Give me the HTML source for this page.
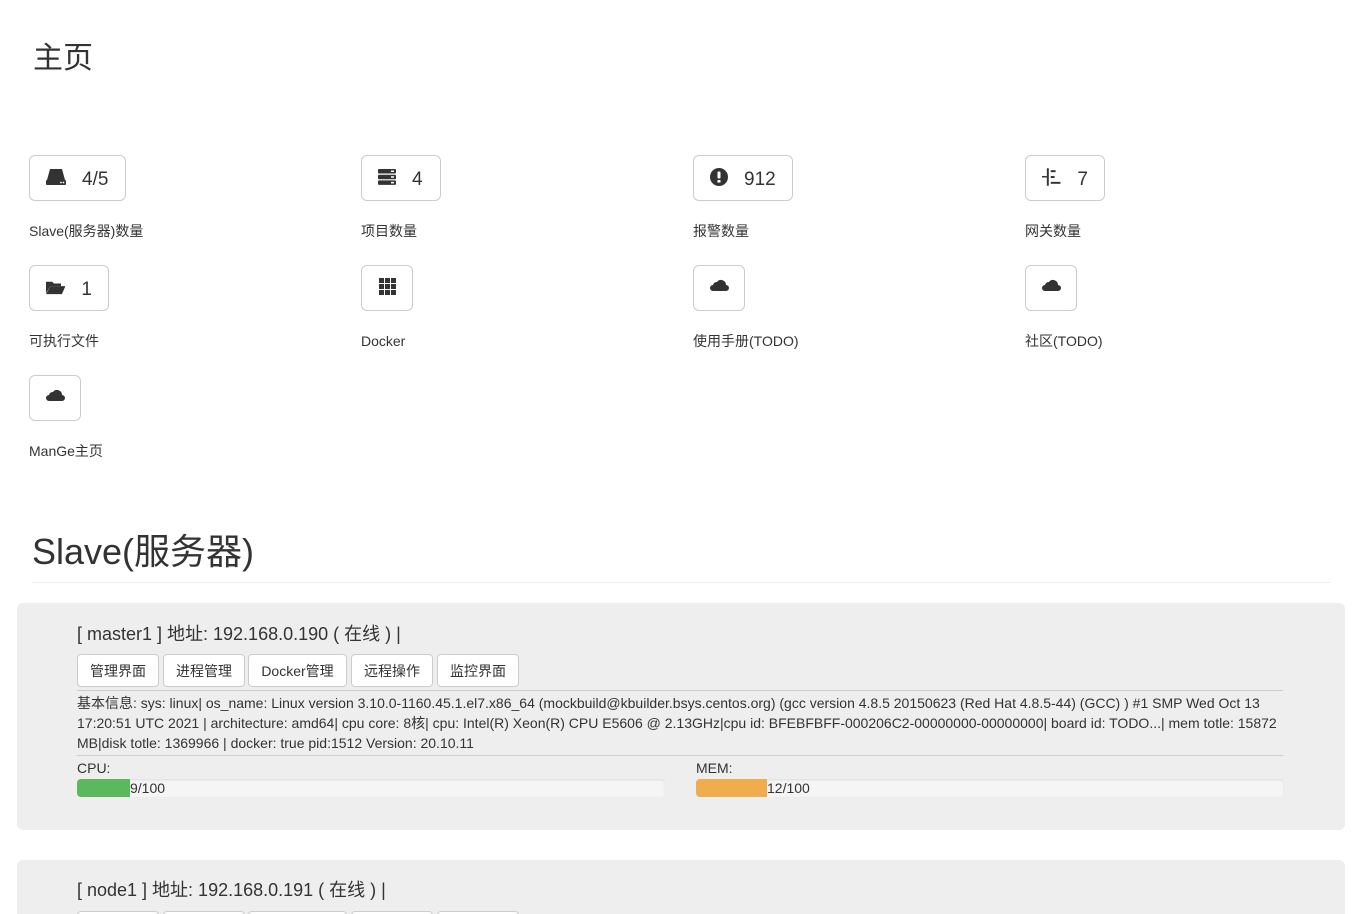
<!DOCTYPE html>
<html><head><meta charset="utf-8"><style>
*{box-sizing:border-box}
html,body{overflow:hidden;height:914px}
body{margin:0;background:#fff;font-family:"Liberation Sans","Noto Sans CJK SC",sans-serif;color:#333;font-size:14px;width:1364px;position:relative}
.a{position:absolute}
.h1{left:33px;top:39px;font-size:30px;line-height:40px}
.btn{position:absolute;height:46px;border:1px solid #ccc;border-radius:6px;background:#fff;display:flex;align-items:center;padding:3px 16px 0;font-size:19px;color:#333}
.btn svg{margin-right:16px;margin-top:-6px}
.lbl{position:absolute;font-size:14px;line-height:20px}
.sb{position:absolute;height:33px;border:1px solid #ccc;border-radius:4px;background:#fff;font-size:14px;line-height:31px;text-align:center;padding-top:1px}
.panel{position:absolute;left:17px;width:1328px;background:#eee;border-radius:6px}
.bar{position:absolute;height:18px;background:#f5f5f5;border-radius:4px;box-shadow:inset 0 1px 2px rgba(0,0,0,.1);font-size:14px;line-height:18px;overflow:hidden}
</style></head><body>
<div class="a h1">主页</div>

<div class="btn" style="left:29px;top:155px;width:97px"><svg width="20" height="16" viewBox="0 0 20 16"><path d="M4 0h12l3 11H1z" fill="#333"/><rect x="0" y="11" width="20" height="5" rx="1" fill="#333"/><circle cx="15" cy="13.5" r=".9" fill="#fff"/><circle cx="17.5" cy="13.5" r=".9" fill="#fff"/></svg>4/5</div>
<div class="lbl" style="left:29px;top:221px">Slave(服务器)数量</div>

<div class="btn" style="left:361px;top:155px;width:80px"><svg width="18" height="16" viewBox="0 0 18 16"><rect y="0" width="18" height="4.5" rx="1" fill="#333"/><rect y="5.7" width="18" height="4.5" rx="1" fill="#333"/><rect y="11.4" width="18" height="4.5" rx="1" fill="#333"/><rect x="13" y="1.5" width="3" height="1.5" fill="#fff"/><rect x="13" y="7.2" width="3" height="1.5" fill="#fff"/><rect x="13" y="12.9" width="3" height="1.5" fill="#fff"/></svg>4</div>
<div class="lbl" style="left:361px;top:221px">项目数量</div>

<div class="btn" style="left:693px;top:155px;width:100px"><svg width="18" height="18" viewBox="0 0 18 18"><circle cx="9" cy="9" r="9" fill="#333"/><rect x="7.5" y="3.5" width="3" height="7" rx="1" fill="#fff"/><rect x="7.5" y="12" width="3" height="2.6" fill="#fff"/></svg>912</div>
<div class="lbl" style="left:693px;top:221px">报警数量</div>

<div class="btn" style="left:1025px;top:155px;width:80px"><svg width="20" height="18" viewBox="0 0 20 18"><rect x="5" y="0" width="2" height="18" fill="#333"/><rect x="0" y="8" width="5" height="1.5" fill="#333"/><rect x="9" y="2" width="5" height="2" fill="#333"/><rect x="9" y="8" width="4" height="2" fill="#333"/><rect x="9" y="14" width="10" height="2" fill="#333"/></svg>7</div>
<div class="lbl" style="left:1025px;top:221px">网关数量</div>

<div class="btn" style="left:29px;top:265px;width:80px"><svg width="22" height="16" viewBox="0 0 22 16"><path d="M0 2h7l2 2h8v3H5L0 15z" fill="#333"/><path d="M5 7h17l-4 9H0z" fill="#333"/></svg>1</div>
<div class="lbl" style="left:29px;top:331px">可执行文件</div>

<div class="btn" style="left:361px;top:265px;width:52px;justify-content:center;padding:0"><svg width="17" height="17" viewBox="0 0 17 17" style="margin:-4px 0 0"><g fill="#333"><rect x="0" y="0" width="5" height="5"/><rect x="6" y="0" width="5" height="5"/><rect x="12" y="0" width="5" height="5"/><rect x="0" y="6" width="5" height="5"/><rect x="6" y="6" width="5" height="5"/><rect x="12" y="6" width="5" height="5"/><rect x="0" y="12" width="5" height="5"/><rect x="6" y="12" width="5" height="5"/><rect x="12" y="12" width="5" height="5"/></g></svg></div>
<div class="lbl" style="left:361px;top:331px">Docker</div>

<div class="btn" style="left:693px;top:265px;width:52px;justify-content:center;padding:0"><svg width="19" height="12" viewBox="0 0 19 12" style="margin:-6px 0 0"><path d="M3 12a3 3 0 0 1 0-6 4 4 0 0 1 4-3 5 5 0 0 1 9 3 3 3 0 0 1 0 6z" fill="#333"/></svg></div>
<div class="lbl" style="left:693px;top:331px">使用手册(TODO)</div>

<div class="btn" style="left:1025px;top:265px;width:52px;justify-content:center;padding:0"><svg width="19" height="12" viewBox="0 0 19 12" style="margin:-6px 0 0"><path d="M3 12a3 3 0 0 1 0-6 4 4 0 0 1 4-3 5 5 0 0 1 9 3 3 3 0 0 1 0 6z" fill="#333"/></svg></div>
<div class="lbl" style="left:1025px;top:331px">社区(TODO)</div>

<div class="btn" style="left:29px;top:375px;width:52px;justify-content:center;padding:0"><svg width="19" height="12" viewBox="0 0 19 12" style="margin:-6px 0 0"><path d="M3 12a3 3 0 0 1 0-6 4 4 0 0 1 4-3 5 5 0 0 1 9 3 3 3 0 0 1 0 6z" fill="#333"/></svg></div>
<div class="lbl" style="left:29px;top:441px">ManGe主页</div>

<div class="a" style="left:32px;top:528px;font-size:36px;line-height:48px">Slave(服务器)</div>
<div class="a" style="left:32px;top:582px;width:1298px;border-top:1px solid #eee"></div>

<div class="panel" style="top:603px;height:227px"></div>
<div class="a" style="left:77px;top:622px;font-size:18px;line-height:24px">[ master1 ] 地址: 192.168.0.190 ( 在线 ) |</div>
<div class="sb" style="left:77px;top:654px;width:82px">管理界面</div>
<div class="sb" style="left:163px;top:654px;width:82px">进程管理</div>
<div class="sb" style="left:248px;top:654px;width:99px">Docker管理</div>
<div class="sb" style="left:351px;top:654px;width:82px">远程操作</div>
<div class="sb" style="left:437px;top:654px;width:82px">监控界面</div>
<div class="a" style="left:77px;top:690px;width:1206px;border-top:1px solid #ccc"></div>
<div class="a" style="left:77px;top:693px;width:1210px;line-height:20px">基本信息: sys: linux| os_name: Linux version 3.10.0-1160.45.1.el7.x86_64 (mockbuild@kbuilder.bsys.centos.org) (gcc version 4.8.5 20150623 (Red Hat 4.8.5-44) (GCC) ) #1 SMP Wed Oct 13 17:20:51 UTC 2021 | architecture: amd64| cpu core: 8核| cpu: Intel(R) Xeon(R) CPU E5606 @ 2.13GHz|cpu id: BFEBFBFF-000206C2-00000000-00000000| board id: TODO...| mem totle: 15872 MB|disk totle: 1369966 | docker: true pid:1512 Version: 20.10.11</div>
<div class="a" style="left:77px;top:755px;width:1206px;border-top:1px solid #ccc"></div>
<div class="a" style="left:77px;top:760px;line-height:16px">CPU:</div>
<div class="a" style="left:696px;top:760px;line-height:16px">MEM:</div>
<div class="bar" style="left:77px;top:779px;width:588px"><span style="display:inline-block;width:53px;height:18px;background:#5cb85c;vertical-align:top"></span>9/100</div>
<div class="bar" style="left:696px;top:779px;width:588px"><span style="display:inline-block;width:71px;height:18px;background:#f0ad4e;vertical-align:top"></span>12/100</div>

<div class="panel" style="top:860px;height:100px"></div>
<div class="a" style="left:77px;top:878px;font-size:18px;line-height:24px">[ node1 ] 地址: 192.168.0.191 ( 在线 ) |</div>
<div class="sb" style="left:77px;top:911px;width:82px"></div>
<div class="sb" style="left:163px;top:911px;width:82px"></div>
<div class="sb" style="left:248px;top:911px;width:99px"></div>
<div class="sb" style="left:351px;top:911px;width:82px"></div>
<div class="sb" style="left:437px;top:911px;width:82px"></div>
</body></html>
